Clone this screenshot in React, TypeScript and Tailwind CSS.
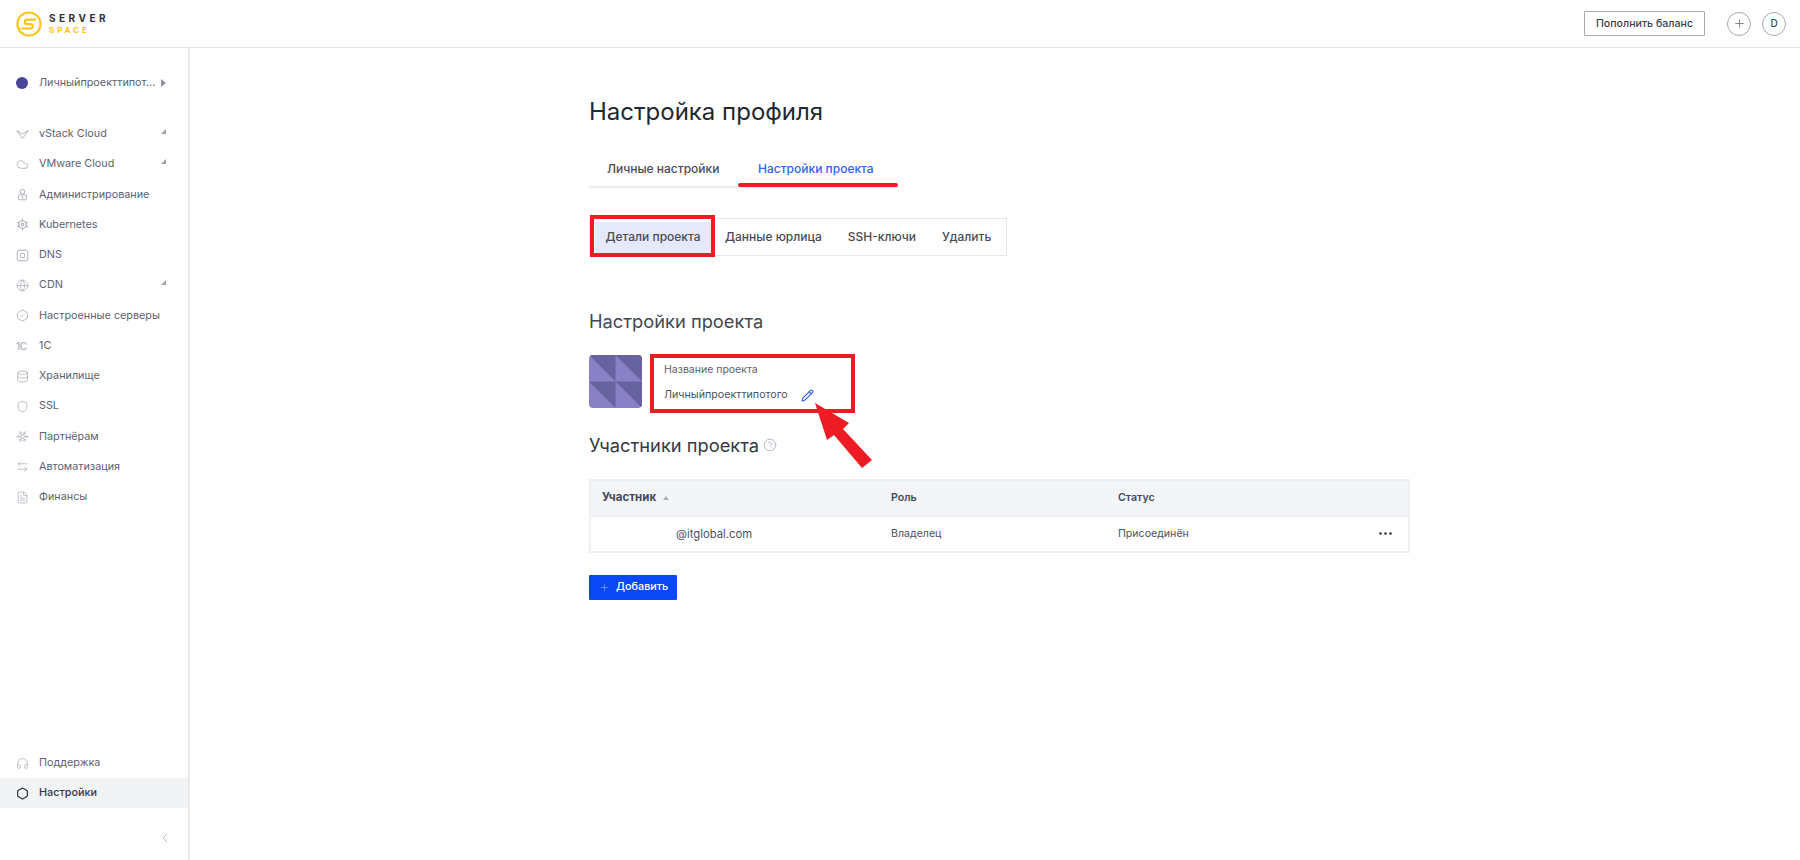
import React from "react";
import { Cloud, Database, Shield, Snowflake, FileText, Headphones, Hexagon, ChevronLeft, Globe, Plus, Pencil, HelpCircle, ArrowLeftRight, Hexagon as Hex, Check } from "lucide-react";

const ic = "w-[13px] h-[13px] text-[#a9adb5]";
const Caret = () => (
  <svg width="7" height="7" viewBox="0 0 7 7" className="absolute left-[160px] top-[9px]"><path d="M6 1V6H1Z" fill="#9ca0a8" /></svg>
);
const Vs = () => (
  <svg viewBox="0 0 16 16" className={ic} fill="none" stroke="currentColor" strokeWidth="1.100"><path d="M1 3l7 10 7-10-7 4.500z" /></svg>
);
const Person = () => (
  <svg viewBox="0 0 16 16" className={ic} fill="none" stroke="currentColor" strokeWidth="1.200"><circle cx="8" cy="4.500" r="2.800" /><rect x="3" y="8.500" width="10" height="6" rx="1.500" /><circle cx="8" cy="11.500" r=".8" /></svg>
);
const Kube = () => (
  <svg viewBox="0 0 16 16" className={ic} fill="none" stroke="currentColor" strokeWidth="1.400"><circle cx="8" cy="8" r="4.600" /><circle cx="8" cy="8" r="1.500" /><path d="M8 1v2.500M8 12.500V15M1.500 5l2.400 1.300M12.100 9.700l2.400 1.300M1.500 11l2.400-1.300M12.100 6.300L14.500 5" /></svg>
);
const Dns = () => (
  <svg viewBox="0 0 16 16" className={ic} fill="none" stroke="currentColor" strokeWidth="1.200"><rect x="1.500" y="1.500" width="13" height="13" rx="2" /><rect x="5.500" y="5.500" width="5" height="5" rx="1" /></svg>
);
const HexCheck = () => (
  <span className="relative flex items-center justify-center w-[13px] h-[13px]">
    <Hex className={ic} strokeWidth={1.500} />
    <Check className="absolute w-[7px] h-[7px] text-[#a9adb5]" strokeWidth={2} />
  </span>
);
const OneC = () => <span className="text-[10px] leading-none text-[#a9adb5] tracking-[-0.5px] font-medium">1C</span>;

const nav: [string, React.ReactNode, boolean][] = [
  ["vStack Cloud", <Vs />, true],
  ["VMware Cloud", <Cloud className={ic} strokeWidth={1.400} />, true],
  ["Администрирование", <Person />, false],
  ["Kubernetes", <Kube />, false],
  ["DNS", <Dns />, false],
  ["CDN", <Globe className={ic} strokeWidth={1.400} />, true],
  ["Настроенные серверы", <HexCheck />, false],
  ["1C", <OneC />, false],
  ["Хранилище", <Database className={ic} strokeWidth={1.400} />, false],
  ["SSL", <Shield className={ic} strokeWidth={1.400} />, false],
  ["Партнёрам", <Snowflake className={ic} strokeWidth={1.400} />, false],
  ["Автоматизация", <ArrowLeftRight className={ic} strokeWidth={1.400} />, false],
  ["Финансы", <FileText className={ic} strokeWidth={1.400} />, false],
];

const NavRow = ({ label, icon, caret }: { label: string; icon: React.ReactNode; caret: boolean }) => (
  <div className="relative flex items-center h-[30.25px] pl-[16px]">
    <span className="w-[23px] flex justify-start">{icon}</span>
    <span className="text-[10.800px] text-[#5c6270] whitespace-nowrap">{label}</span>
    {caret && <Caret />}
  </div>
);

export default function App() {
  return (
    <div className="w-[1800px] h-[860px] bg-white overflow-hidden relative flex flex-col font-['Inter',sans-serif]">
      <header className="h-[48px] shrink-0 border-b border-[#e4e5e7] flex items-center pl-[16px] pr-[14px]">
        <svg width="26" height="26" viewBox="0 0 27 27" fill="none" className="mr-[7px]">
          <circle cx="13.500" cy="13.500" r="12" stroke="#fcc419" strokeWidth="2.200" />
          <path d="M20 9H11.500a2.300 2.300 0 0 0 0 4.600h3.500a2.300 2.300 0 0 1 0 4.600H6" stroke="#fcc419" strokeWidth="2.200" strokeLinecap="round" />
        </svg>
        <div className="flex flex-col">
          <span className="text-[10px] leading-[13px] font-bold tracking-[3.500px] text-[#2e333d]">SERVER</span>
          <span className="text-[8px] leading-[10px] font-bold tracking-[2.900px] text-[#fcc419]">SPACE</span>
        </div>
        <div className="ml-auto flex items-center">
          <button className="h-[25px] w-[121px] border border-[#a9acb2] rounded-[1px] text-[10.600px] font-medium text-[#3a3f4a] flex items-center justify-center">Пополнить баланс</button>
          <span className="ml-[22px] w-[24px] h-[24px] rounded-full border border-[#a5a8ae] flex items-center justify-center"><Plus className="w-[13px] h-[13px] text-[#555a64]" strokeWidth={1.300} /></span>
          <span className="ml-[11px] w-[24px] h-[24px] rounded-full border border-[#a5a8ae] flex items-center justify-center text-[10px] font-medium text-[#444955]">D</span>
        </div>
      </header>
      <div className="flex flex-1 min-h-0">
        <aside className="w-[190px] shrink-0 border-r-2 border-[#e8e9eb] flex flex-col">
          <div className="flex items-center h-[20px] mt-[25px] pl-[16px]">
            <span className="w-[12px] h-[12px] rounded-full bg-[#4b459b]" />
            <span className="ml-[11px] text-[10.800px] text-[#5c6270] w-[118px] whitespace-nowrap">Личныйпроекттипот...</span>
            <svg width="5" height="8" viewBox="0 0 5 8" className="ml-[4px]"><path d="M0 0l5 4-5 4z" fill="#8f939b" /></svg>
          </div>
          <nav className="mt-[26px]">
            {nav.map(([l, i, c]) => <NavRow key={l} label={l} icon={i} caret={c} />)}
          </nav>
          <div className="mt-auto flex flex-col">
            <div className="flex items-center h-[30px] pl-[16px]">
              <span className="w-[23px]"><Headphones className={ic} strokeWidth={1.400} /></span>
              <span className="text-[10.800px] text-[#5c6270]">Поддержка</span>
            </div>
            <div className="flex items-center h-[30px] pl-[16px] bg-[#f2f3f4]">
              <span className="w-[23px]"><Hexagon className="w-[13px] h-[13px] text-[#2e333d]" strokeWidth={2.200} /></span>
              <span className="text-[10.800px] font-medium text-[#343946]">Настройки</span>
            </div>
            <div className="h-[52px] flex items-center justify-end pr-[15px] pt-[8px]">
              <ChevronLeft className="w-[16px] h-[16px] text-[#a9adb5]" strokeWidth={1.200} />
            </div>
          </div>
        </aside>
        <main className="flex-1 pl-[399px] pt-[48px]">
          <div className="w-[821px]">
            <h1 className="text-[24px] leading-[32px] text-[#23272f]">Настройка профиля</h1>
            <div className="mt-[27px] flex h-[33px] border-b-2 border-[#ececee] w-[310px] text-[12px] font-medium leading-[28px] whitespace-nowrap">
              <span className="pl-[18px] w-[169px] text-[#484c57]">Личные настройки</span>
              <span className="text-[#2f62f5]">Настройки проекта</span>
            </div>
            <div className="mt-[30px] flex items-center h-[38px] w-[418px] border border-[#e6e7e9] pl-[5px] text-[12px] text-[#484c57] font-medium">
              <span className="h-[31px] w-[116px] bg-[#e5e9fb] flex items-center justify-center">Детали проекта</span>
              <span className="ml-[14px]">Данные юрлица</span>
              <span className="ml-[26px]">SSH-ключи</span>
              <span className="ml-[26px]">Удалить</span>
            </div>
            <h2 className="mt-[51px] text-[18.300px] leading-[28px] text-[#434753]">Настройки проекта</h2>
            <div className="mt-[20px] flex h-[54px]">
              <svg width="53" height="53" viewBox="0 0 53 53" className="rounded-[4px]">
                <rect width="53" height="53" fill="#8a80c5" />
                <path d="M0 0H26.500V26.500ZM26.500 0H53V26.500ZM0 26.500H26.500V53ZM26.500 26.500H53V53Z" fill="#67639f" />
              </svg>
              <div className="ml-[22px] flex flex-col">
                <span className="text-[10.500px] leading-[14px] mt-[8px] text-[#5c6270] whitespace-nowrap">Название проекта</span>
                <span className="mt-[11px] flex items-center text-[10.700px] leading-[14px] text-[#4c515e] whitespace-nowrap">
                  Личныйпроекттипотого
                  <Pencil className="ml-[13px] w-[13px] h-[13px] text-[#2a5bf0]" strokeWidth={2} />
                </span>
              </div>
            </div>
            <div className="mt-[22px] flex items-center h-[28px]">
              <h2 className="text-[18.300px] leading-[28px] text-[#343844]">Участники проекта</h2>
              <HelpCircle className="ml-[4px] w-[14px] h-[14px] text-[#a9adb5]" strokeWidth={1.400} />
            </div>
            <div className="mt-[20px] border-2 border-[#eeeff1] rounded-[1px] text-[10.600px]">
              <div className="flex items-center h-[36px] bg-[#f4f5f8] border-b-2 border-[#eceef2] font-semibold text-[#444955]">
                <span className="w-[300px] pl-[11px] flex items-center font-bold text-[11.500px]">Участник
                  <svg width="6" height="4" viewBox="0 0 6 4" className="ml-[7px]"><path d="M3 0l3 4H0z" fill="#a9adb5" /></svg>
                </span>
                <span className="w-[227px]">Роль</span>
                <span>Статус</span>
              </div>
              <div className="flex items-center h-[34px] text-[#4c515e]">
                <span className="w-[300px] pl-[85px] text-[11.300px]">@itglobal.com</span>
                <span className="w-[227px]">Владелец</span>
                <span>Присоединён</span>
                <svg width="13" height="3" viewBox="0 0 13 3" className="ml-auto mr-[16px] mb-[2px]"><circle cx="1.500" cy="1.500" r="1.300" fill="#333" /><circle cx="6.500" cy="1.500" r="1.300" fill="#333" /><circle cx="11.500" cy="1.500" r="1.300" fill="#333" /></svg>
              </div>
            </div>
            <button className="mt-[22px] h-[25px] w-[88px] bg-[#0a47f5] rounded-[1px] flex items-center pl-[10px] text-[10.800px] font-medium text-white">
              <Plus className="w-[11px] h-[11px] text-[#a9c0ff] mr-[6px]" strokeWidth={1.200} />Добавить
            </button>
          </div>
        </main>
      </div>
      {/* red annotations lying over the page */}
      <div className="absolute left-[738px] top-[183px] w-[160px] h-[4px] rounded-full bg-[#ec1c2b]" />
      <div className="absolute left-[590px] top-[215px] w-[125px] h-[42px] border-[4px] border-[#ed1c24]" />
      <div className="absolute left-[650px] top-[354px] w-[205px] h-[59px] border-[4px] border-[#ed1c24]" />
      <svg className="absolute left-[800px] top-[395px]" width="80" height="80" viewBox="800 395 80 80">
        <path d="M815 403L849 423L843 429L872 460L862 468L834 435L827 440Z" fill="#ed1c24" />
      </svg>
    </div>
  );
}
